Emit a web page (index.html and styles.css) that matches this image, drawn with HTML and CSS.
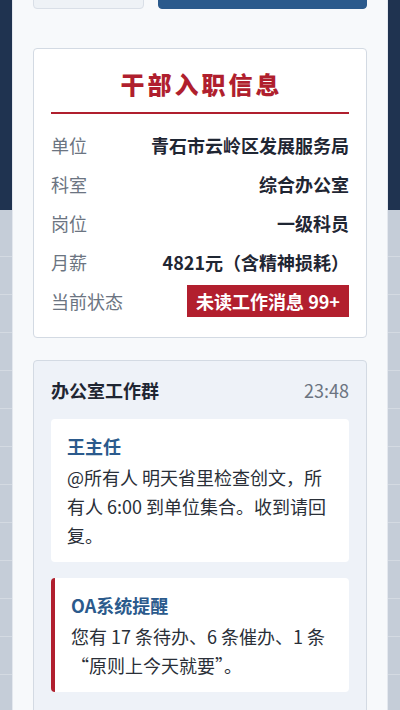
FILE: index.html
```html
<!DOCTYPE html>
<html lang="zh-CN">
<head>
    <meta charset="UTF-8">
    <meta name="viewport" content="width=device-width, initial-scale=1.0">
    <title>干部入职信息</title>
    <link rel="stylesheet" href="styles.css">
</head>
<body>

<div class="panel">
    <div class="actions">
        <button class="btn btn-light"></button>
        <button class="btn btn-primary"></button>
    </div>

    <div class="card info">
        <h1 class="info-title">干部入职信息</h1>
        <div class="row">
            <span class="label">单位</span>
            <span class="value">青石市云岭区发展服务局</span>
        </div>
        <div class="row">
            <span class="label">科室</span>
            <span class="value">综合办公室</span>
        </div>
        <div class="row">
            <span class="label">岗位</span>
            <span class="value">一级科员</span>
        </div>
        <div class="row">
            <span class="label">月薪</span>
            <span class="value">4821元（含精神损耗）</span>
        </div>
        <div class="row">
            <span class="label">当前状态</span>
            <span class="badge">未读工作消息 99+</span>
        </div>
    </div>

    <div class="card chat">
        <div class="chat-head">
            <span class="chat-name">办公室工作群</span>
            <span class="chat-time">23:48</span>
        </div>
        <div class="msg">
            <div class="msg-from">王主任</div>
            <p class="msg-text">@所有人 明天省里检查创文，所有人 6:00 到单位集合。收到请回复。</p>
        </div>
        <div class="msg msg-alert">
            <div class="msg-from">OA系统提醒</div>
            <p class="msg-text">您有 17 条待办、6 条催办、1 条“原则上今天就要”。</p>
        </div>
    </div>
</div>

</body>
</html>
```

FILE: styles.css
```css
body {
    margin: 0;
    height: 710px;
    overflow: hidden;
    font-family: "Noto Sans CJK SC", "Noto Sans", sans-serif;
    color: #1f2633;
    background:
        linear-gradient(#1f3350, #1f3350) top / 100% 210px no-repeat,
        repeating-linear-gradient(#c5cdd8 0, #c5cdd8 37px, #d4dae2 37px, #d4dae2 38px) 0 219px / 100% 100% no-repeat,
        #c5cdd8;
}
.panel {
    margin: 0 12px;
    height: 760px;
    background-color: #f7f9fb;
    border-left: 1px solid #e4e8ee;
    border-right: 1px solid #e4e8ee;
    padding: 0 20px;
    box-sizing: border-box;
}
.actions {
    display: flex;
    gap: 14px;
    margin-top: -31px;
    margin-bottom: 39px;
}
.btn {
    height: 40px;
    border-radius: 4px;
    border: 1px solid #d9dfe7;
    background-color: #eef2f6;
    flex: 1;
}
.btn-primary {
    flex: 2;
    border-color: #2b5a8c;
    background-color: #2b5a8c;
}
.card {
    border: 1px solid #d3dae3;
    border-radius: 4px;
    padding: 0 17px;
}
.info {
    background-color: #ffffff;
    padding-top: 18px;
    padding-bottom: 17px;
}
.info-title {
    margin: 0 0 11px;
    padding-bottom: 11px;
    border-bottom: 2px solid #b01f2e;
    text-align: center;
    color: #b01f2e;
    font-size: 24px;
    line-height: 34px;
    font-weight: 900;
    letter-spacing: 3px;
    text-indent: 3px;
}
.row {
    display: flex;
    justify-content: space-between;
    align-items: center;
    min-height: 39px;
    font-size: 18px;
    line-height: 26px;
}
.label {
    color: #6b7481;
}
.value {
    font-weight: 700;
    color: #1f2633;
}
.badge {
    background-color: #b21f2e;
    color: #ffffff;
    font-weight: 700;
    padding: 3px 9px;
}
.chat {
    margin-top: 22px;
    background-color: #eef2f8;
    padding-top: 15px;
    padding-bottom: 16px;
}
.chat-head {
    display: flex;
    justify-content: space-between;
    align-items: center;
    margin-bottom: 15px;
    line-height: 28px;
}
.chat-name {
    font-size: 18px;
    font-weight: 700;
}
.chat-time {
    font-size: 18px;
    color: #6b7481;
}
.msg {
    background-color: #ffffff;
    border-radius: 4px;
    padding: 13px 16px 12px;
    margin-bottom: 16px;
}
.msg-alert {
    border-left: 4px solid #b01f2e;
    padding-left: 16px;
    padding-bottom: 12px;
}
.msg-from {
    color: #2b5a8c;
    font-size: 18px;
    font-weight: 700;
    line-height: 28px;
    margin-bottom: 3px;
}
.msg-text {
    margin: 0;
    font-size: 18px;
    line-height: 29px;
    color: #2a2f38;
}
```
